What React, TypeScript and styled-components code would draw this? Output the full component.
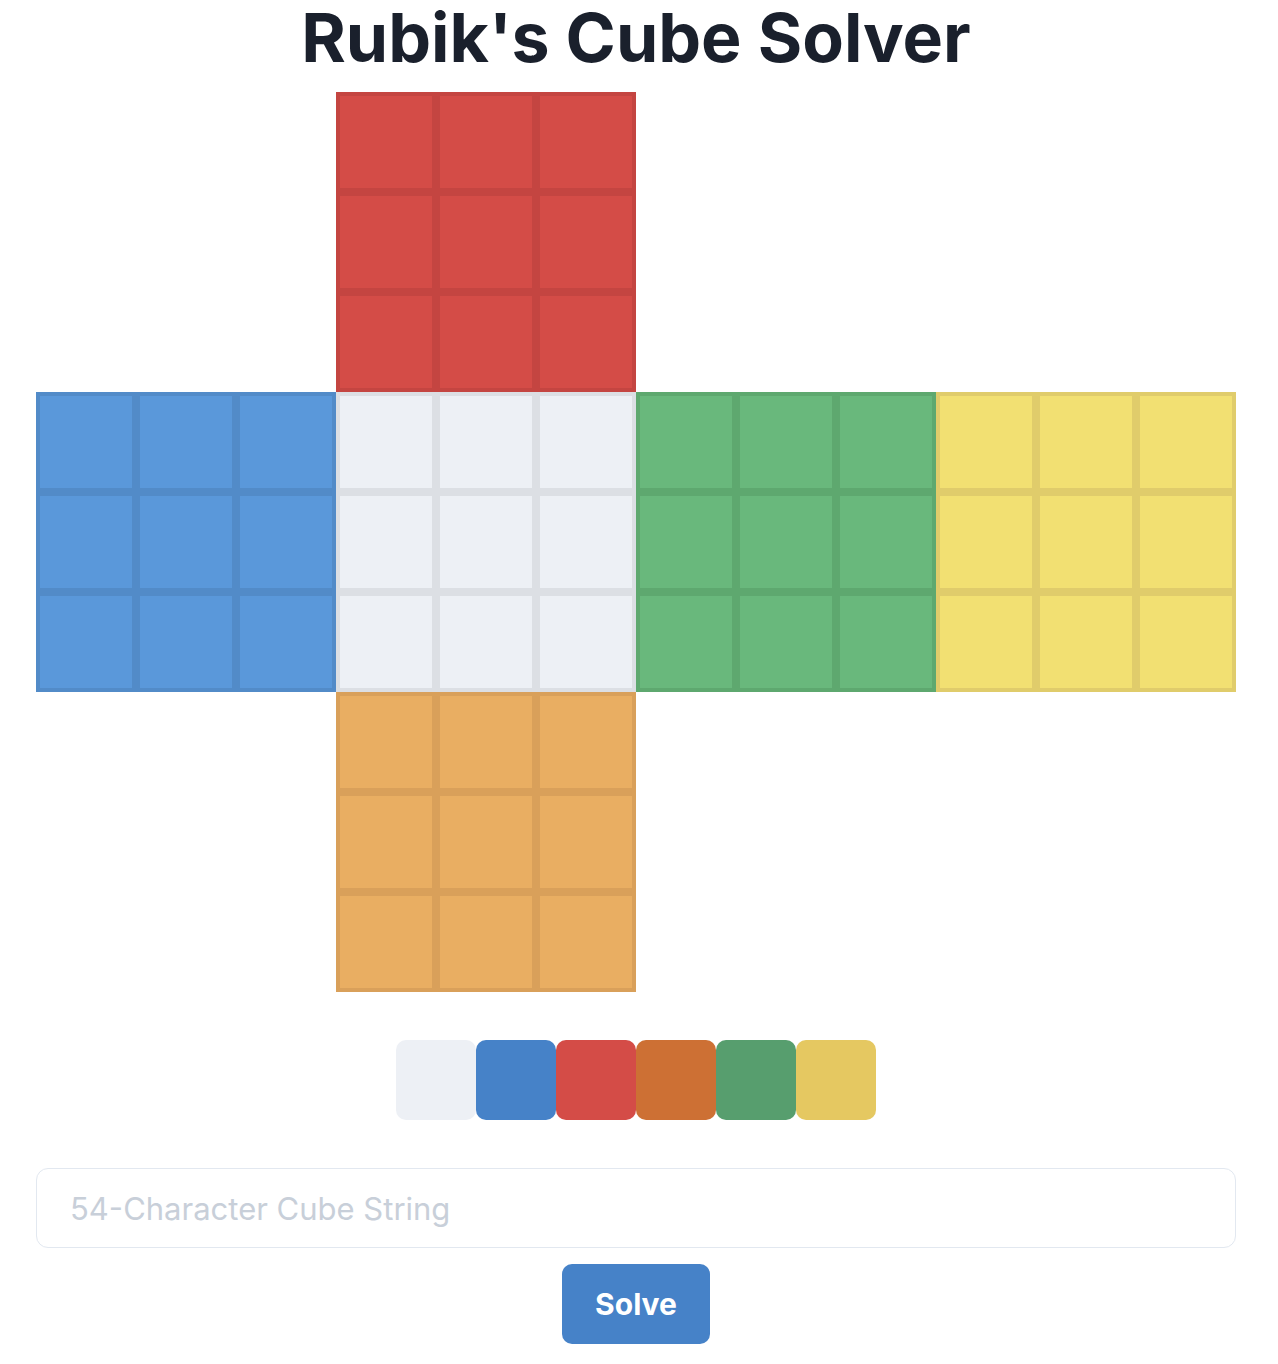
import React from "react";
import styled, { createGlobalStyle } from "styled-components";

const GlobalStyle = createGlobalStyle`
  html, body { margin: 0; padding: 0; background: #ffffff; }
  body { font-family: Inter, "Noto Sans", "Liberation Sans", sans-serif; color: #1a202c; }
  * { box-sizing: border-box; }
`;

type FaceKey = "U" | "L" | "F" | "R" | "B" | "D";

const FACE_COLORS: Record<FaceKey, string> = {
  U: "#d44c47",
  L: "#5a98da",
  F: "#edf0f5",
  R: "#69b87c",
  B: "#f2e072",
  D: "#e9ae62",
};

const FACE_BORDERS: Record<FaceKey, string> = {
  U: "#c44541",
  L: "#528bc8",
  F: "#dcdfe4",
  R: "#5ea86f",
  B: "#e0cc6b",
  D: "#d9a05a",
};

const FACE_POS: Record<FaceKey, { col: number; row: number }> = {
  U: { col: 2, row: 1 },
  L: { col: 1, row: 2 },
  F: { col: 2, row: 2 },
  R: { col: 3, row: 2 },
  B: { col: 4, row: 2 },
  D: { col: 2, row: 3 },
};

const PALETTE = ["#edf0f5", "#4682c8", "#d44c47", "#cd7034", "#579e6e", "#e5c861"];

const Page = styled.main`
  width: 1200px;
  margin-left: 36px;
  display: flex;
  flex-direction: column;
  align-items: center;
  padding-bottom: 20px;
`;

const Title = styled.h1`
  margin: 0;
  height: 92px;
  padding-top: 0;
  font-size: 68px;
  line-height: 74px;
  font-weight: 700;
  letter-spacing: 0;
  color: #1a202c;
`;

const Net = styled.div`
  display: grid;
  grid-template-columns: repeat(4, 300px);
  grid-template-rows: repeat(3, 300px);
`;

const Face = styled.div<{ $col: number; $row: number }>`
  grid-column: ${(p) => p.$col};
  grid-row: ${(p) => p.$row};
  display: grid;
  grid-template-columns: repeat(3, 100px);
  grid-template-rows: repeat(3, 100px);
`;

const Sticker = styled.div<{ $bg: string; $edge: string }>`
  width: 100px;
  height: 100px;
  background: ${(p) => p.$bg};
  border: 4px solid ${(p) => p.$edge};
  cursor: pointer;
`;

const Palette = styled.div`
  display: flex;
  margin-top: 48px;
`;

const Swatch = styled.button<{ $bg: string }>`
  width: 80px;
  height: 80px;
  border: none;
  padding: 0;
  border-radius: 10px;
  background: ${(p) => p.$bg};
  cursor: pointer;
`;

const CubeInput = styled.input`
  margin-top: 48px;
  width: 1200px;
  height: 80px;
  border: 1.5px solid #e2e8f0;
  border-radius: 12px;
  padding: 0 33px;
  font-family: Inter, "Noto Sans", sans-serif;
  font-size: 31px;
  color: #1a202c;
  outline: none;
  &::placeholder {
    color: #c8cfd9;
  }
`;

const SolveButton = styled.button`
  margin-top: 16px;
  width: 148px;
  height: 80px;
  border: none;
  border-radius: 10px;
  background: #4682c8;
  color: #ffffff;
  font-family: Inter, "Noto Sans", sans-serif;
  font-size: 30px;
  font-weight: 700;
  cursor: pointer;
`;

const FACES: FaceKey[] = ["U", "L", "F", "R", "B", "D"];

export default function App() {
  return (
    <>
      <GlobalStyle />
      <Page>
        <Title>Rubik's Cube Solver</Title>
        <Net>
          {FACES.map((f) => (
            <Face key={f} $col={FACE_POS[f].col} $row={FACE_POS[f].row}>
              {Array.from({ length: 9 }).map((_, i) => (
                <Sticker key={i} $bg={FACE_COLORS[f]} $edge={FACE_BORDERS[f]} />
              ))}
            </Face>
          ))}
        </Net>
        <Palette>
          {PALETTE.map((c) => (
            <Swatch key={c} $bg={c} aria-label={c} />
          ))}
        </Palette>
        <CubeInput placeholder="54-Character Cube String" />
        <SolveButton>Solve</SolveButton>
      </Page>
    </>
  );
}
